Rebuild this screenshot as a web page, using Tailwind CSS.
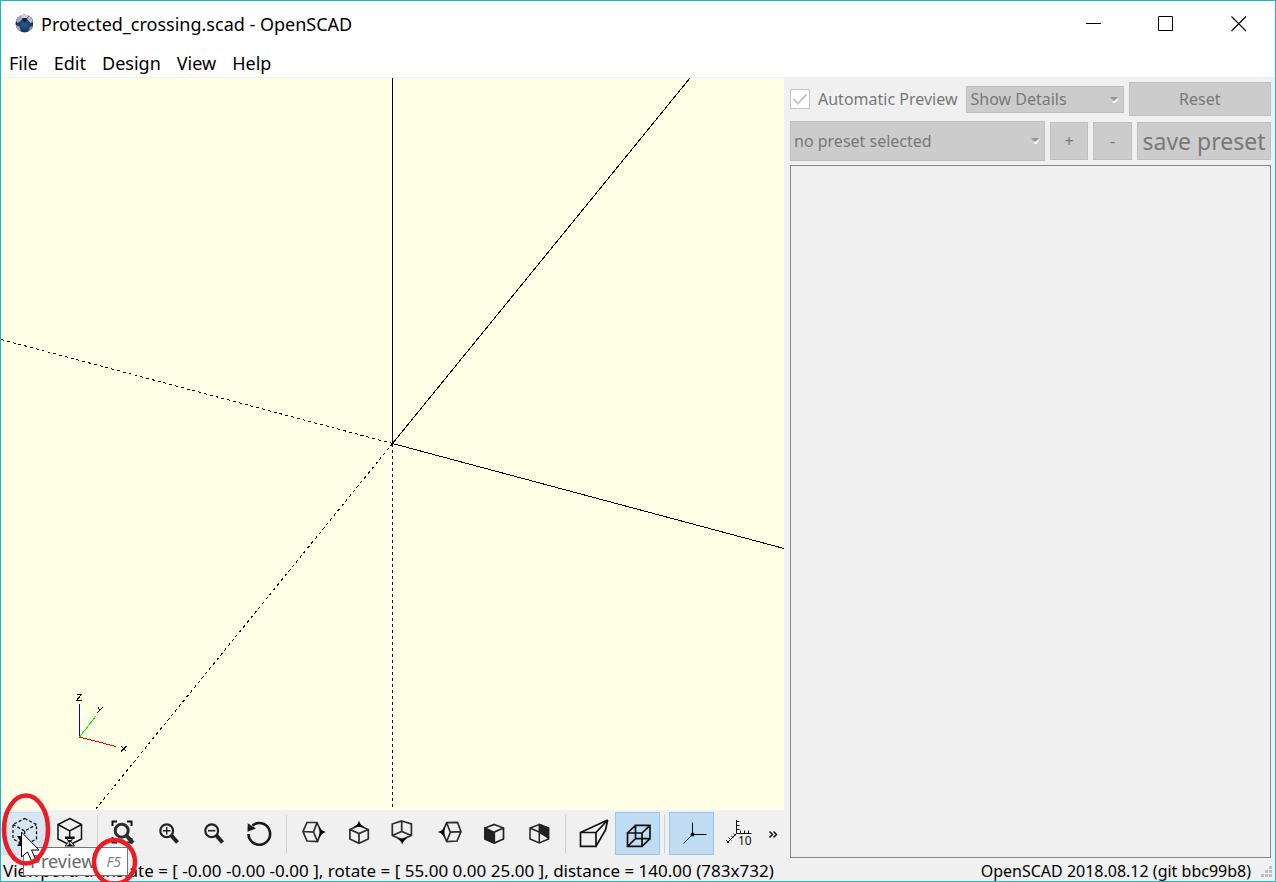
<!DOCTYPE html>
<html lang="en">
<head>
<meta charset="utf-8">
<title>Protected_crossing.scad - OpenSCAD</title>
<script src="https://cdn.jsdelivr.net/npm/@tailwindcss/browser@4"></script>
</head>
<body class="h-screen overflow-hidden font-['Noto_Sans',sans-serif]">
<div class="relative flex h-full flex-col border border-[#1fb5c4] bg-[#f0f0f0] text-black">

  <header class="flex h-[46px] shrink-0 items-center bg-white pl-3">
    <svg class="mr-2 size-5 shrink-0" viewBox="0 0 20 20" aria-hidden="true">
      <defs><radialGradient id="ball" cx="50%" cy="55%" r="55%"><stop offset="0" stop-color="#2a5c95"/><stop offset=".6" stop-color="#1d3d68"/><stop offset="1" stop-color="#1a2434"/></radialGradient></defs>
      <circle cx="11.500" cy="9.500" r="9" fill="url(#ball)"/>
      <path d="M3 7 Q4 3 7.500 1.500 L10 4 Q8 7.500 4.500 9Z" fill="#a3aab8"/><path d="M14 5 L16 2 Q19.500 4 20 8 L17.500 9Z" fill="#b9bec7"/>
      <path d="M7.500 1.500 Q11 -.3 16 1.500 L13.500 4.500 L9.500 4.500Z" fill="#cdd1d8"/><path d="M2.800 11 L6.500 12.500 L8 17.500 Q3.500 16 2.800 11Z" fill="#a3aab6"/><path d="M20 11.500 L17 13 L15 17.500 Q19.500 15.500 20 11.500Z" fill="#8b95a4"/>
      <path d="M9 5 L11.500 9 L14 5 L13 4 L10 4Z" fill="#13233a"/>
    </svg>
    <h1 class="flex-1 whitespace-nowrap text-[18px]">Protected_crossing.scad - OpenSCAD</h1>
    <button aria-label="Minimize" class="flex h-full w-[72px] items-center justify-center"><svg class="size-4" viewBox="0 0 16 16"><path d="M0 7.500H15" stroke="#000"/></svg></button>
    <button aria-label="Maximize" class="flex h-full w-[72px] items-center justify-center"><svg class="size-4" viewBox="0 0 16 16"><path d="M.5 .5H14.500V14.500H.5Z" fill="none" stroke="#000"/></svg></button>
    <button aria-label="Close" class="flex h-full w-[73px] items-center justify-center"><svg class="size-4" viewBox="0 0 16 16"><path d="M.5 .5L15 15M15 .5L.5 15" stroke="#000" stroke-width="1.100"/></svg></button>
  </header>

  <nav class="flex h-[30px] shrink-0 items-center gap-4 bg-white pl-2 pt-0.5 text-[18px]">
    <button>File</button><button>Edit</button><button>Design</button><button>View</button><button>Help</button>
  </nav>

  <main class="grid min-h-0 flex-1 grid-cols-[783fr_491fr] border-t border-[#f0f0f0]">
    <section class="flex min-h-0 min-w-0 flex-col" aria-label="3D view">
      <div class="min-h-0 flex-1 bg-[#ffffe5]">
        <svg class="block h-full w-full" viewBox="0 0 783 732" preserveAspectRatio="xMidYMid slice" shape-rendering="crispEdges" fill="none" stroke="#000">
          <path d="M391.500 0V365.500M391.500 365.500L689 0M391.500 365.500L783 470.500"/>
          <path d="M391.500 365.500V732M391.500 365.500L94 732M391.500 365.500L0 261.500" stroke-dasharray="3 3"/>
          <path d="M78.500 626V659" stroke="#0000e0"/>
          <path d="M78.500 659L95 638" stroke="#00ff00"/>
          <path d="M78.500 659L115 668.500" stroke="#ff0000"/>
          <path d="M75.500 616.500H80.500L75.500 622.500H80.500M97 629.500L99.500 632.500M102 629L96 635M120 668L125.500 673.500M125.500 668L120 673.500"/>
        </svg>
      </div>

      <div class="flex h-[50px] shrink-0 items-start pl-0.5 pt-0.5" role="toolbar" aria-label="View tools">
        <button aria-label="Preview" class="h-[43px] w-[45px] border border-[#c3dcf0] bg-[#d8e6f1]"><svg class="-m-px h-[43px] w-[45px]" viewBox="0 0 45 43" fill="none" stroke="#111" stroke-width="1.300"><path stroke-dasharray="3 2" d="M21.700 6.500L33.500 12.500V27L21.700 33L10 27V12.500ZM10 12.500L21.700 19L33.500 12.500M21.700 19V33"/><path d="M14 24H20L22 29L20 34H14L17 29Z" fill="#111" stroke="none"/></svg></button>
        <button aria-label="Render" class="h-[43px] w-[45px]"><svg class="h-[43px] w-[45px]" viewBox="0 0 45 43" fill="none" stroke="#111" stroke-width="1.500"><path d="M21.700 6.500L33.500 12.500V27L21.700 33L10 27V12.500ZM10 12.500L21.700 19L33.500 12.500M21.700 19V25"/><path d="M17 25H26.500L22.500 29L26.500 34H17L21 29Z" fill="#f0f0f0" stroke-width="1"/><path d="M17 25H26.500V27H17ZM19 28H24.500L21.700 31ZM19 34L21.700 31L25 34Z" fill="#111" stroke="none"/></svg></button>
        <span class="mx-1 mt-[3px] h-[38px] w-px bg-[#cfcfcf]"></span>
        <button aria-label="View all" class="h-[43px] w-[45px]"><svg class="h-[43px] w-[45px]" viewBox="0 0 45 43" fill="none" stroke="#111"><path stroke-width="2" d="M10.500 14V9.500H15M25 9.500H29.500V14M10.500 25V30.500H15M25 30.500H29.500V26"/><circle cx="19.700" cy="18.700" r="6.500" stroke="#2d2d2d" stroke-width="3"/><path stroke="#2d2d2d" stroke-width="4" d="M24 23L31 31"/></svg></button>
        <button aria-label="Zoom in" class="h-[43px] w-[45px]"><svg class="h-[43px] w-[45px]" viewBox="0 0 45 43" fill="none" stroke="#222"><circle cx="19.700" cy="18.700" r="6.400" stroke-width="2.200"/><path stroke-width="4" d="M24 23L30.500 30.500"/><path stroke-width="1.400" d="M16 18.700H23.400M19.700 15V22.400"/></svg></button>
        <button aria-label="Zoom out" class="h-[43px] w-[45px]"><svg class="h-[43px] w-[45px]" viewBox="0 0 45 43" fill="none" stroke="#222"><circle cx="19.700" cy="18.700" r="6.400" stroke-width="2.200"/><path stroke-width="4" d="M24 23L30.500 30.500"/><path stroke-width="1.600" d="M16 18.700H23.400"/></svg></button>
        <button aria-label="Reset view" class="h-[43px] w-[45px]"><svg class="h-[43px] w-[45px]" viewBox="0 0 45 43" fill="none" stroke="#1a1a1a"><path stroke-width="2.600" d="M15.500 13.500A10.800 10.800 0 1 1 11.500 22"/><path d="M10.700 11.300L19 16.500L10.500 19.700Z" fill="#1a1a1a" stroke="none"/></svg></button>
        <span class="mx-1 mt-[3px] h-[38px] w-px bg-[#cfcfcf]"></span>
        <button aria-label="Right" class="h-[43px] w-[45px]"><svg class="h-[43px] w-[45px]" viewBox="0 0 45 43" fill="none" stroke="#2d2d2d" stroke-width="1.700"><path d="M16 10.500H26L30 20L26.500 29.500L16 29L12 19.500ZM12 19.500L22.500 20L26 10.500M22.500 20L26.500 29.500"/><path d="M28.500 14.500Q30.500 19 35 20Q30.500 21 28.500 26Z" fill="#000" stroke="none"/></svg></button>
        <button aria-label="Top" class="h-[43px] w-[45px]"><svg class="h-[43px] w-[45px]" viewBox="0 0 45 43" fill="none" stroke="#2d2d2d" stroke-width="1.700"><path d="M23 13.500L32.300 17.500V27L23 31.300L13.900 27V17.500ZM13.900 17.500L23 21.500L32.300 17.500M23 21.500V31"/><path d="M17.500 15Q22 13 23 8.500Q24 13 28.500 15Z" fill="#000" stroke="none"/></svg></button>
        <button aria-label="Bottom" class="h-[43px] w-[45px]"><svg class="h-[43px] w-[45px]" viewBox="0 0 45 43" fill="none" stroke="#2d2d2d" stroke-width="1.700"><path d="M20.700 9L30.400 12V23.500L20.700 27.500L11.300 23.500V12ZM11.300 23.500L20.700 19.500L30.400 23.500M20.700 19.500V9"/><path d="M15.500 26.500Q20 28 21.200 32.500Q22.500 28 26.500 26.500Z" fill="#000" stroke="none"/></svg></button>
        <button aria-label="Left" class="h-[43px] w-[45px]"><svg class="h-[43px] w-[45px]" viewBox="0 0 45 43" fill="none" stroke="#2d2d2d" stroke-width="1.700"><path d="M20.700 10.700L31.500 10.300L35 19.700L31 29L20.700 29.500L16.700 20ZM35 19.700L24.300 20.200L20.700 10.700M24.300 20.200L20.700 29.500"/><path d="M18.500 14.500Q16.500 19 11.700 20Q16.500 21 18.500 26Z" fill="#000" stroke="none"/></svg></button>
        <button aria-label="Front" class="h-[43px] w-[45px]"><svg class="h-[43px] w-[45px]" viewBox="0 0 45 43" fill="none" stroke="#222" stroke-width="1.700"><path d="M14 16L23.300 20.500V31L14 27Z" fill="#222"/><path d="M23.300 12.500L32.500 16V27L23.300 31L14 27V16ZM23.300 20L32.500 16"/></svg></button>
        <button aria-label="Back" class="h-[43px] w-[45px]"><svg class="h-[43px] w-[45px]" viewBox="0 0 45 43" fill="none" stroke="#222" stroke-width="1.500"><path d="M23.300 12.500L32.500 16V26L23.300 20Z" fill="#222"/><path d="M23.300 12.500L32.500 16V27L23.300 31L14 27V16ZM14 16L23.300 20V31"/></svg></button>
        <span class="mx-1 mt-[3px] h-[38px] w-px bg-[#cfcfcf]"></span>
        <button aria-label="Perspective" class="h-[43px] w-[45px]"><svg class="h-[43px] w-[45px]" viewBox="0 0 45 43" fill="none" stroke="#111" stroke-width="1.700"><path d="M10.500 20.500H26V34.300H10.500ZM10.500 20.500L37.700 8L26 20.500M37.700 8L35.500 18L26 34.300"/></svg></button>
        <button aria-label="Orthogonal" aria-pressed="true" class="h-[43px] w-[45px] border border-[#90c8f6] bg-[#c0dcf3]"><svg class="-m-px h-[43px] w-[45px]" viewBox="0 0 45 43" fill="none" stroke="#111" stroke-width="1.700"><path d="M12.500 21H27V34.300H12.500ZM20.500 13.300H35V26.700H20.500ZM12.500 21L20.500 13.300M27 21L35 13.300M12.500 34.300L20.500 26.700M27 34.300L35 26.700"/></svg></button>
        <span class="mx-1 mt-[3px] h-[38px] w-px bg-[#cfcfcf]"></span>
        <button aria-label="Show axes" aria-pressed="true" class="h-[43px] w-[45px] border border-[#90c8f6] bg-[#c0dcf3]"><svg class="-m-px h-[43px] w-[45px]" viewBox="0 0 45 43" fill="none" stroke="#111"><path d="M23.500 10.500V22.500H37.500M23.500 22.500L14.500 31.500"/><circle cx="23.600" cy="22.600" r="2" fill="#111" stroke="none"/></svg></button>
        <button aria-label="Show scale markers" class="h-[43px] w-[45px]"><svg class="h-[43px] w-[45px]" viewBox="0 0 45 43" fill="none" stroke="#111"><path d="M22.500 8V21.500H37.500M22.500 9.500H25.500M22.500 13.500H25.500M22.500 17.500H25.500M26.500 21V18.500M30.500 21V18.500M34.500 21V18.500M22.500 21.500L13 31M19.500 21.500L21.500 24M17 23.500L19.500 26M14.500 25.500L17.500 28.500M12 28L15 31"/><text x="24" y="33" font-size="12" fill="#111" stroke="none">10</text></svg></button>
        <button aria-label="More tools" class="ml-2 h-[43px] w-3"><svg class="h-[43px] w-3" viewBox="0 0 12 43" fill="none" stroke="#111" stroke-width="1.500"><path d="M2.500 19.500L5.500 22.500L2.500 25.500M6.500 19.500L9.500 22.500L6.500 25.500"/></svg></button>
      </div>
    </section>

    <aside class="flex min-h-0 min-w-0 flex-col pb-0.5 pl-1.5 pr-1 pt-1 text-[16px] text-[#787878]" aria-label="Customizer">
      <div class="flex h-[34px] items-center gap-[5px]">
        <label class="mr-1 flex items-center gap-2 whitespace-nowrap">
          <span class="relative size-5">
            <input type="checkbox" checked disabled class="block size-5 appearance-none border border-[#c6c6c6] bg-white">
            <svg class="pointer-events-none absolute inset-0 size-5" viewBox="0 0 20 20" fill="none" stroke="#c8c8c8" stroke-width="2"><path d="M3.500 10L8 14.500L16.500 5.500"/></svg>
          </span>
          Automatic Preview
        </label>
        <span class="relative min-w-0 flex-[158]">
          <select disabled aria-label="Detail level" class="block h-[27px] w-full appearance-none border border-[#bfbfbf] bg-[#cccccc] pl-[3px] opacity-100"><option>Show Details</option></select>
          <svg class="pointer-events-none absolute right-1 top-2.5 h-2 w-2.5" viewBox="0 0 10 8"><path d="M2 6L5 7L9 2Z" fill="#fff"/><path d="M0 1H8L4 5Z" fill="#959595"/></svg>
        </span>
        <button disabled class="h-[34px] min-w-0 flex-[141] border border-[#bfbfbf] bg-[#cccccc]">Reset</button>
      </div>
      <div class="mt-[5px] flex h-10 items-center gap-[5px]">
        <span class="relative min-w-0 flex-1">
          <select disabled aria-label="Preset" class="block h-10 w-full appearance-none border border-[#bfbfbf] bg-[#cccccc] pl-[3px] opacity-100"><option>no preset selected</option></select>
          <svg class="pointer-events-none absolute right-1 top-4 h-2 w-2.5" viewBox="0 0 10 8"><path d="M2 6L5 7L9 2Z" fill="#fff"/><path d="M0 1H8L4 5Z" fill="#959595"/></svg>
        </span>
        <button disabled aria-label="Add preset" class="h-[38px] w-[38px] border border-[#bfbfbf] bg-[#cccccc]">+</button>
        <button disabled aria-label="Remove preset" class="h-[38px] w-[39px] border border-[#bfbfbf] bg-[#cccccc]">-</button>
        <button disabled class="h-[38px] w-[134px] whitespace-nowrap border border-[#bfbfbf] bg-[#cccccc] text-[23px] leading-6">save preset</button>
      </div>
      <div class="mt-1 min-h-0 flex-1 border border-[#828790]"></div>
    </aside>
  </main>

  <footer class="flex h-[21px] shrink-0 items-center justify-between whitespace-nowrap pl-0.5 pr-0.5 leading-5">
    <span class="text-[17px]">Viewport: translate = [ -0.00 -0.00 -0.00 ], rotate = [ 55.00 0.00 25.00 ], distance = 140.00 (783x732)</span>
    <span class="flex items-center gap-2.5 text-[16px]">OpenSCAD 2018.08.12 (git bbc99b8)
      <svg class="size-3" viewBox="0 0 12 12" fill="#bfbfbf"><path d="M8 1h3v3h-3zM4 5h3v3h-3zM8 5h3v3h-3zM0 9h3v3h-3zM4 9h3v3h-3zM8 9h3v3h-3z"/></svg>
    </span>
  </footer>

  <div role="tooltip" class="absolute bottom-[5px] left-[22px] flex h-[29px] w-[105px] items-center justify-between border border-[#767676] bg-white pl-1.5 pr-1.5 text-[18px] text-[#686868]">Preview <i class="text-[14px] text-[#808080]">F5</i></div>
  <svg class="pointer-events-none absolute -bottom-px -left-px h-[97px] w-[160px]" viewBox="0 0 160 97" fill="none" aria-hidden="true">
    <path d="M21.500 47V72L27.500 67L31.500 76L35.500 74L31.500 65H39Z" fill="#fff" stroke="#000"/>
    <g stroke="#ec1c24" stroke-width="4.500"><ellipse cx="26" cy="44.500" rx="22" ry="34"/><ellipse cx="114.500" cy="77" rx="20.500" ry="22"/></g>
  </svg>
</div>
</body>
</html>
